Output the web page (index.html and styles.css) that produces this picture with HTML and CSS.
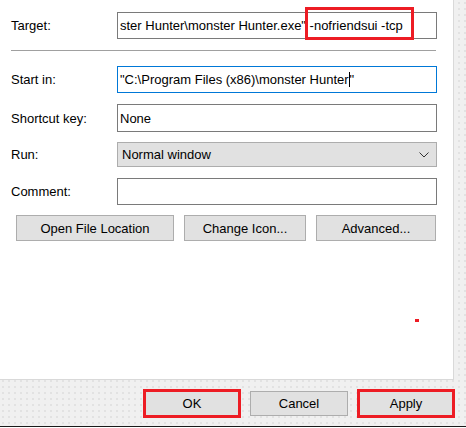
FILE: index.html
```html
<!DOCTYPE html>
<html>
<head>
<meta charset="utf-8">
<link rel="stylesheet" href="styles.css">
</head>
<body>
<div class="window">
  <div class="panel">
    <div class="row row-target">
      <span class="label">Target:</span>
      <div class="field">
        <span class="field-text">ster Hunter\monster Hunter.exe" -nofriendsui -tcp</span>
        <span class="mark mark-target"></span>
      </div>
    </div>
    <div class="separator"></div>
    <div class="row row-start">
      <span class="label">Start in:</span>
      <div class="field field-focus">
        <span class="field-text">"C:\Program Files (x86)\monster Hunter<span class="caret"></span>"</span>
      </div>
    </div>
    <div class="row row-key">
      <span class="label">Shortcut key:</span>
      <div class="field field-tall">
        <span class="field-text">None</span>
      </div>
    </div>
    <div class="row row-run">
      <span class="label">Run:</span>
      <div class="combo">
        <span class="combo-text">Normal window</span>
        <svg class="chevron" width="10" height="6" viewBox="0 0 10 6"><path d="M0.5 0.5 L5 5 L9.5 0.5" fill="none" stroke="#333" stroke-width="1"/></svg>
      </div>
    </div>
    <div class="row row-comment">
      <span class="label">Comment:</span>
      <div class="field"></div>
    </div>
    <div class="actions">
      <button class="btn btn-open">Open File Location</button>
      <button class="btn btn-icon">Change Icon...</button>
      <button class="btn btn-adv">Advanced...</button>
    </div>
    <span class="dot"></span>
  </div>
  <div class="footer">
    <button class="btn dlg btn-hl">OK</button>
    <button class="btn dlg">Cancel</button>
    <button class="btn dlg btn-hl">Apply</button>
  </div>
  <div class="bottom-edge"></div>
</div>
</body>
</html>
```

FILE: styles.css
```css
html, body {
  margin: 0;
  padding: 0;
}
body {
  width: 466px;
  height: 428px;
  overflow: hidden;
  font-family: "Liberation Sans", Arial, sans-serif;
  font-size: 13px;
  color: #000;
  background: #fff;
}
.window {
  width: 466px;
  height: 426px;
  background-color: #f0f0f0;
  background-image: radial-gradient(circle, #dadada 0.6px, transparent 0.9px);
  background-size: 6px 6px;
  display: flex;
  flex-direction: column;
}
.panel {
  position: relative;
  width: 454px;
  height: 380px;
  background: #fff;
  border-right: 1px solid #d9d9d9;
  border-bottom: 1px solid #d9d9d9;
  padding: 12px 0 0 11px;
  box-sizing: border-box;
}
.row {
  display: flex;
  align-items: center;
}
.label {
  width: 106px;
  flex: none;
}
.field {
  position: relative;
  width: 320px;
  height: 27px;
  box-sizing: border-box;
  border: 1px solid #7a7a7a;
  display: flex;
  align-items: center;
  padding-left: 2px;
  white-space: nowrap;
}
.field-tall {
  height: 28px;
}
.field-focus {
  border-color: #0078d7;
}
.field-text {
  position: relative;
}
.caret {
  display: inline-block;
  width: 1px;
  height: 15px;
  background: #000;
  vertical-align: -3px;
}
.mark {
  position: absolute;
  border: 3px solid #ed1c24;
  box-sizing: border-box;
}
.mark-target {
  left: 187px;
  top: -6px;
  width: 109px;
  height: 33px;
}
.separator {
  width: 425px;
  height: 1px;
  background: #a0a0a0;
  margin: 11px 0 15px 0;
}
.row-key { margin-top: 11px; }
.row-run { margin-top: 10px; }
.row-comment { margin-top: 11px; }
.combo {
  width: 320px;
  height: 25px;
  box-sizing: border-box;
  border: 1px solid #adadad;
  background: #e1e1e1;
  display: flex;
  align-items: center;
  justify-content: space-between;
  padding: 0 7px 0 4px;
}
.actions {
  display: flex;
  gap: 10px;
  margin: 10px 0 0 5px;
}
.btn {
  font-family: "Liberation Sans", Arial, sans-serif;
  font-size: 13px;
  color: #000;
  background: #e1e1e1;
  border: 1px solid #adadad;
  box-sizing: border-box;
  height: 26px;
  padding: 0;
  margin: 0;
}
.btn-open { width: 158px; }
.btn-icon { width: 122px; }
.btn-adv { width: 120px; }
.dot {
  position: absolute;
  left: 415px;
  top: 319px;
  width: 4px;
  height: 3px;
  background: #ed1c24;
}
.footer {
  flex: 1;
  display: flex;
  align-items: center;
  gap: 9px;
  padding-left: 143px;
  padding-top: 1px;
}
.dlg {
  width: 98px;
  height: 25px;
}
.btn-hl {
  height: 29px;
  border: 3px solid #ed1c24;
}
.bottom-edge {
  height: 1px;
}
body::after {
  content: "";
  display: block;
  height: 1px;
  background: #1a1a1a;
}
```
